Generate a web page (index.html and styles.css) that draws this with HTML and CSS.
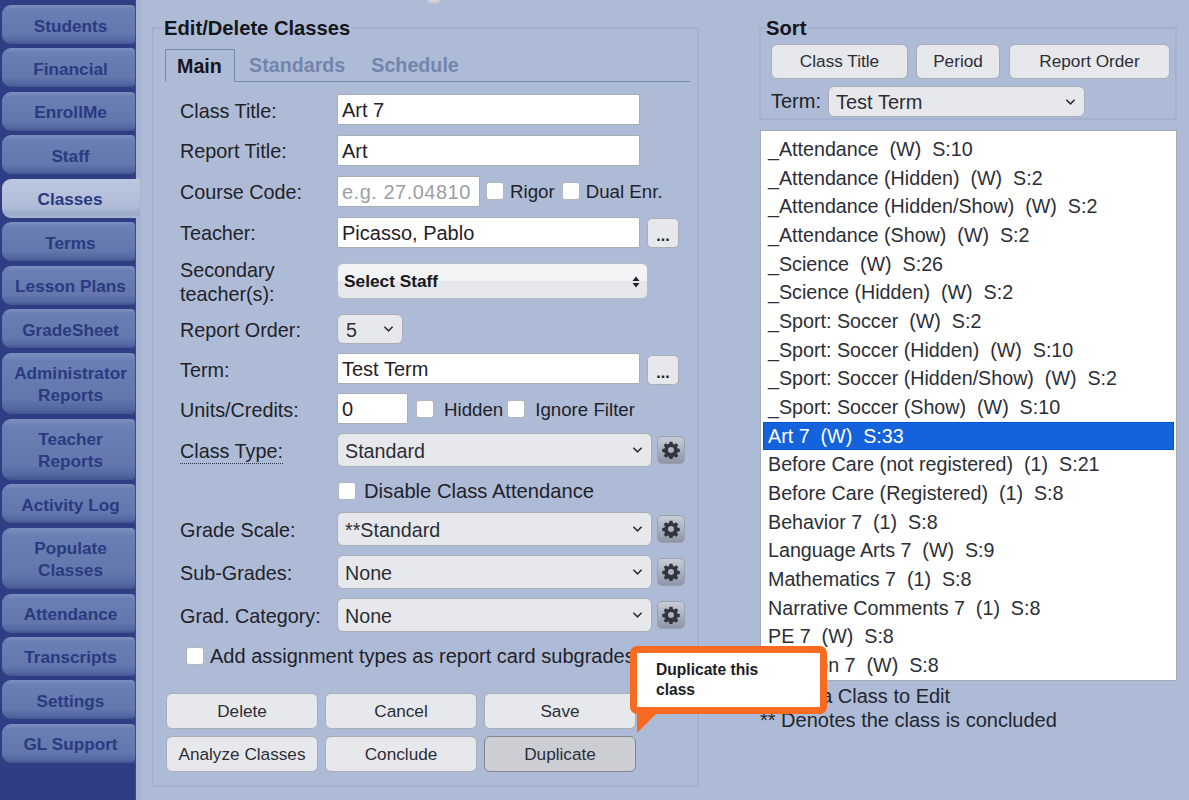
FILE: index.html
```html
<!DOCTYPE html>
<html lang="en">
<head>
<meta charset="utf-8">
<title>Edit/Delete Classes</title>
<link rel="stylesheet" href="styles.css">
</head>
<body>
<div class="page">
  <span class="top-blob"></span>
  <nav class="side">
    <a class="nav">Students</a>
    <a class="nav">Financial</a>
    <a class="nav">EnrollMe</a>
    <a class="nav">Staff</a>
    <a class="nav active">Classes</a>
    <a class="nav">Terms</a>
    <a class="nav">Lesson Plans</a>
    <a class="nav">GradeSheet</a>
    <a class="nav tall">Administrator<br>Reports</a>
    <a class="nav tall">Teacher<br>Reports</a>
    <a class="nav">Activity Log</a>
    <a class="nav tall">Populate<br>Classes</a>
    <a class="nav">Attendance</a>
    <a class="nav">Transcripts</a>
    <a class="nav">Settings</a>
    <a class="nav">GL Support</a>
  </nav>

  <main class="content">
    <fieldset class="box edit">
      <legend>Edit/Delete Classes</legend>
      <div class="tabs">
        <span class="tab current">Main</span>
        <span class="tab">Standards</span>
        <span class="tab">Schedule</span>
      </div>
      <div class="form">
        <div class="row"><label class="lbl">Class Title:</label><input class="txt wide" value="Art 7"></div>
        <div class="row h32"><label class="lbl">Report Title:</label><input class="txt wide" value="Art"></div>
        <div class="row h32"><label class="lbl">Course Code:</label><input class="txt code" placeholder="e.g. 27.04810"><span class="chk first"></span><span class="opt">Rigor</span><span class="chk second"></span><span class="opt">Dual Enr.</span></div>
        <div class="row h32"><label class="lbl">Teacher:</label><input class="txt wide" value="Picasso, Pablo"><button class="dots">...</button></div>
        <div class="row h48"><label class="lbl two">Secondary<br>teacher(s):</label>
          <div class="multi"><span>Select Staff</span>
            <svg class="updown" viewBox="0 0 8 12"><path d="M4 0.5 7.500 5H0.500ZM4 11.500 0.500 7H7.500Z"/></svg>
          </div>
        </div>
        <div class="row h30"><label class="lbl">Report Order:</label>
          <div class="sel small"><span>5</span><svg class="chev" viewBox="0 0 12 8"><path d="M1.500 1.500 6 6 10.500 1.500"/></svg></div>
        </div>
        <div class="row"><label class="lbl">Term:</label><input class="txt wide" value="Test Term"><button class="dots">...</button></div>
        <div class="row"><label class="lbl">Units/Credits:</label><input class="txt units" value="0"><span class="chk third"></span><span class="opt hid">Hidden</span><span class="chk fourth"></span><span class="opt">Ignore Filter</span></div>
        <div class="row h34"><label class="lbl dotted"><span>Class Type:</span></label>
          <div class="sel big"><span>Standard</span><svg class="chev" viewBox="0 0 12 8"><path d="M1.500 1.500 6 6 10.500 1.500"/></svg></div>
          <button class="gear"><svg viewBox="0 0 24 24"><path fill-rule="evenodd" d="M10 1h4l.6 3.100 1.700.7 2.600-1.800 2.800 2.800-1.800 2.600.7 1.700 3.100.6v4l-3.100.6-.7 1.700 1.800 2.600-2.800 2.800-2.600-1.800-1.700.7-.6 3.100h-4l-.6-3.100-1.700-.7-2.600 1.800-2.800-2.800 1.800-2.600-.7-1.700-3.100-.6v-4l3.100-.6.7-1.700-1.800-2.600 2.800-2.800 2.600 1.800 1.700-.7zM12 8a4 4 0 1 0 0 8 4 4 0 0 0 0-8z"/></svg></button>
        </div>
        <div class="row h27 indent"><span class="chk"></span><span class="opt disable">Disable Class Attendance</span></div>
        <div class="row h34"><label class="lbl">Grade Scale:</label>
          <div class="sel big"><span>**Standard</span><svg class="chev" viewBox="0 0 12 8"><path d="M1.500 1.500 6 6 10.500 1.500"/></svg></div>
          <button class="gear"><svg viewBox="0 0 24 24"><path fill-rule="evenodd" d="M10 1h4l.6 3.100 1.700.7 2.600-1.800 2.800 2.800-1.800 2.600.7 1.700 3.100.6v4l-3.100.6-.7 1.700 1.800 2.600-2.800 2.800-2.600-1.800-1.700.7-.6 3.100h-4l-.6-3.100-1.700-.7-2.600 1.800-2.800-2.800 1.800-2.600-.7-1.700-3.100-.6v-4l3.100-.6.7-1.700-1.800-2.600 2.800-2.800 2.600 1.800 1.700-.7zM12 8a4 4 0 1 0 0 8 4 4 0 0 0 0-8z"/></svg></button>
        </div>
        <div class="row h34"><label class="lbl">Sub-Grades:</label>
          <div class="sel big"><span>None</span><svg class="chev" viewBox="0 0 12 8"><path d="M1.500 1.500 6 6 10.500 1.500"/></svg></div>
          <button class="gear"><svg viewBox="0 0 24 24"><path fill-rule="evenodd" d="M10 1h4l.6 3.100 1.700.7 2.600-1.800 2.800 2.800-1.800 2.600.7 1.700 3.100.6v4l-3.100.6-.7 1.700 1.800 2.600-2.800 2.800-2.600-1.800-1.700.7-.6 3.100h-4l-.6-3.100-1.700-.7-2.600 1.800-2.800-2.800 1.800-2.600-.7-1.700-3.100-.6v-4l3.100-.6.7-1.700-1.800-2.600 2.800-2.800 2.600 1.800 1.700-.7zM12 8a4 4 0 1 0 0 8 4 4 0 0 0 0-8z"/></svg></button>
        </div>
        <div class="row h34"><label class="lbl">Grad. Category:</label>
          <div class="sel big"><span>None</span><svg class="chev" viewBox="0 0 12 8"><path d="M1.500 1.500 6 6 10.500 1.500"/></svg></div>
          <button class="gear"><svg viewBox="0 0 24 24"><path fill-rule="evenodd" d="M10 1h4l.6 3.100 1.700.7 2.600-1.800 2.800 2.800-1.800 2.600.7 1.700 3.100.6v4l-3.100.6-.7 1.700 1.800 2.600-2.800 2.800-2.600-1.800-1.700.7-.6 3.100h-4l-.6-3.100-1.700-.7-2.600 1.800-2.800-2.800 1.800-2.600-.7-1.700-3.100-.6v-4l3.100-.6.7-1.700-1.800-2.600 2.800-2.800 2.600 1.800 1.700-.7zM12 8a4 4 0 1 0 0 8 4 4 0 0 0 0-8z"/></svg></button>
        </div>
        <div class="row h26 addrow"><span class="chk"></span><span class="addtxt">Add assignment types as report card subgrades</span></div>
      </div>
      <div class="actions">
        <button class="btn">Delete</button>
        <button class="btn">Cancel</button>
        <button class="btn">Save</button>
        <button class="btn">Analyze Classes</button>
        <button class="btn">Conclude</button>
        <button class="btn pressed">Duplicate</button>
      </div>
    </fieldset>

    <div class="rightcol">
      <fieldset class="box sort">
        <legend>Sort</legend>
        <div class="sortbtns">
          <button class="btn b1">Class Title</button>
          <button class="btn b2">Period</button>
          <button class="btn b3">Report Order</button>
        </div>
        <div class="termrow">
          <span>Term:</span>
          <div class="sel termsel"><span>Test Term</span><svg class="chev" viewBox="0 0 12 8"><path d="M1.500 1.500 6 6 10.500 1.500"/></svg></div>
        </div>
      </fieldset>
      <ul class="list">
        <li>_Attendance  (W)  S:10</li>
        <li>_Attendance (Hidden)  (W)  S:2</li>
        <li>_Attendance (Hidden/Show)  (W)  S:2</li>
        <li>_Attendance (Show)  (W)  S:2</li>
        <li>_Science  (W)  S:26</li>
        <li>_Science (Hidden)  (W)  S:2</li>
        <li>_Sport: Soccer  (W)  S:2</li>
        <li>_Sport: Soccer (Hidden)  (W)  S:10</li>
        <li>_Sport: Soccer (Hidden/Show)  (W)  S:2</li>
        <li>_Sport: Soccer (Show)  (W)  S:10</li>
        <li class="sel-item">Art 7  (W)  S:33</li>
        <li>Before Care (not registered)  (1)  S:21</li>
        <li>Before Care (Registered)  (1)  S:8</li>
        <li>Behavior 7  (1)  S:8</li>
        <li>Language Arts 7  (W)  S:9</li>
        <li>Mathematics 7  (1)  S:8</li>
        <li>Narrative Comments 7  (1)  S:8</li>
        <li>PE 7  (W)  S:8</li>
        <li>Religion 7  (W)  S:8</li>
      </ul>
      <p class="note">Select a Class to Edit<br>** Denotes the class is concluded</p>
    </div>
  </main>

  <div class="tip">
    <p>Duplicate this class</p>
    <svg class="tail" viewBox="0 0 22 22"><path d="M0 0H22L0 22Z"/></svg>
  </div>
</div>
</body>
</html>
```
FILE: styles.css
```css
* { box-sizing: border-box; }
html, body { margin: 0; height: 100%; }
body {
  background: #aebbd6;
  color: #1f2229;
  font-family: "Liberation Sans", Arial, sans-serif;
  font-size: 20px;
  overflow: hidden;
}
.page {
  position: relative;
  display: flex;
  width: 1189px;
  height: 800px;
  overflow: hidden;
}
.top-blob {
  position: absolute;
  left: 426px;
  top: -5px;
  width: 16px;
  height: 9px;
  border-radius: 50%;
  background: radial-gradient(#d9d7d4 20%, #aebbd6 90%);
}

/* sidebar */
.side {
  flex: 0 0 135px;
  width: 135px;
  height: 800px;
  padding: 5px 0 0 2px;
  display: flex;
  flex-direction: column;
  gap: 4.470px;
  background: #2f3e84;
  box-shadow: 1px 0 0 #3a4a8e, 6px 0 0 #a8b6d3;
}
.nav {
  display: flex;
  align-items: center;
  justify-content: center;
  text-align: center;
  height: 39px;
  flex: none;
  border-radius: 9px 4px 4px 9px;
  background: linear-gradient(#7c90bf 0, #6a7fb4 12%, #6377ad 75%, #5266a0 92%, #43558f 100%);
  color: #2a3a80;
  font-weight: bold;
  font-size: 17.200px;
  line-height: 22px;
  padding: 2px 0 0 4px;
}
.nav.tall { height: 61.300px; }
.nav.active {
  width: 138px;
  background: linear-gradient(#bcc7df 0, #b1bdd8 70%, #9ba9c9 90%, #a9b6d3 100%);
  border-radius: 9px 0 0 9px;
  padding: 2px 2px 0 0;
}

/* panels */
.content {
  flex: 1;
  display: flex;
  align-items: flex-start;
  padding: 16px 12px 0 17px;
  gap: 61px;
}
.box {
  margin: 0;
  padding: 0;
  border: 2px solid #a3b1cf;
  min-width: 0;
}
.box legend {
  font-weight: bold;
  font-size: 20.200px;
  line-height: 24px;
  padding: 0 2px 0 0;
  margin-left: -2px;
  color: #14161c;
}
.edit {
  width: 547px;
  height: 771px;
  padding: 0 0 0 12px;
}
.tabs {
  display: flex;
  align-items: flex-end;
  height: 33px;
  margin: 9px 7px 0 -1px;
  border-bottom: 1px solid #7788b2;
}
.tab {
  padding: 0 13px;
  height: 33px;
  line-height: 34px;
  font-weight: bold;
  font-size: 19.700px;
  color: #7385ad;
}
.tab.current {
  width: 70px;
  color: #14161c;
  border: 1px solid #7788b2;
  border-bottom: 1px solid #aebbd6;
  padding: 0 11px;
  margin-right: 1px;
  margin-bottom: -1px;
  line-height: 32px;
}
.form {
  display: flex;
  flex-direction: column;
  gap: 9px;
  margin-top: 12px;
}
.row {
  display: flex;
  align-items: center;
  height: 31px;
  flex: none;
}
.h26 { height: 26px; }
.h27 { height: 27px; }
.h30 { height: 30px; }
.h32 { height: 32px; }
.h34 { height: 34px; }
.h48 { height: 48px; }
.lbl {
  flex: 0 0 171px;
  width: 171px;
  padding: 2px 0 0 14px;
  white-space: nowrap;
  line-height: 24px;
  font-size: 19.800px;
}
.dotted span { border-bottom: 1px dotted #2c3550; padding-bottom: 1px; }
.txt {
  height: 31px;
  border: 1px solid #a9adb6;
  border-radius: 2px;
  background: #fff;
  color: #1f2229;
  font: 20px "Liberation Sans", Arial, sans-serif;
  padding: 2px 4px 0;
}
.txt::placeholder { color: #9b9ea6; opacity: 1; letter-spacing: .5px; }
.wide { width: 303px; }
.code { width: 143px; }
.units { width: 71px; }
.chk {
  display: inline-block;
  flex: none;
  width: 18px;
  height: 18px;
  border: 1px solid #b3b6bf;
  border-radius: 3px;
  background: #fff;
}
.first { margin-left: 6px; margin-right: 6px; }
.second { margin-left: 7px; margin-right: 6px; }
.third { margin-left: 8px; margin-right: 10px; }
.fourth { margin-left: 4px; margin-right: 10px; }
.opt { white-space: nowrap; font-size: 18.700px; padding-top: 2px; }
.dots {
  width: 32px;
  height: 30px;
  margin: 2px 0 0 7px;
  padding: 6px 0 0;
  border: 1px solid #a9adb6;
  border-radius: 5px;
  background: #e7e8ec;
  color: #1f2229;
  font: bold 16px "Liberation Sans", Arial, sans-serif;
}
.multi {
  position: relative;
  width: 311px;
  height: 36px;
  padding-left: 6px;
  display: flex;
  align-items: center;
  border: 1px solid #b7bbc5;
  border-radius: 6px;
  background: linear-gradient(#f2f3f5 50%, #e6e7eb 50%);
  font-weight: bold;
  font-size: 17.300px;
  color: #16181d;
}
.updown {
  position: absolute;
  right: 7px;
  top: 12px;
  width: 8px;
  height: 12px;
  fill: #1f2229;
}
.sel {
  position: relative;
  display: flex;
  align-items: center;
  height: 34px;
  border: 1px solid #a9adb6;
  border-radius: 6px;
  background: #e7e8ec;
  padding: 2px 0 0 7px;
  color: #2b2e36;
  font-size: 19.700px;
}
.small { width: 66px; height: 30px; padding-left: 8px; }
.big { width: 315px; }
.chev {
  position: absolute;
  right: 8px;
  top: 50%;
  width: 11px;
  height: 8px;
  margin-top: -4px;
  fill: none;
  stroke: #2b2e36;
  stroke-width: 1.700;
}
.gear {
  width: 28px;
  height: 28px;
  margin-left: 5px;
  padding: 4px;
  border: 1px solid #9b9fae;
  border-radius: 5px;
  background: linear-gradient(#c9ccd6, #8f95a8);
}
.gear svg { display: block; width: 18px; height: 18px; fill: #33353c; }
.indent { padding: 2px 0 0 172px; }
.disable { margin-left: 8px; font-size: 20.200px; }
.addrow { padding: 4px 0 0 20px; }
.addtxt { margin-left: 6px; white-space: nowrap; font-size: 20px; }
.actions {
  display: grid;
  grid-template-columns: repeat(3, 152px);
  grid-auto-rows: 36px;
  gap: 7px;
  margin-top: 26px;
}
.btn {
  height: 36px;
  padding: 0;
  border: 1px solid #a9adb6;
  border-radius: 6px;
  background: #e7e8ec;
  color: #2b2e36;
  font: 17.200px "Liberation Sans", Arial, sans-serif;
}
.pressed { background: #cdced4; border-color: #83868f; }

/* right column */
.rightcol { width: 418px; }
.sort {
  width: 418px;
  height: 104px;
  margin-left: -1px;
  padding: 4px 0 0 10px;
}
.sort legend { margin-left: -5px; }
.sortbtns { display: flex; }
.b1 { width: 137px; height: 35px; }
.b2 { width: 84px; height: 35px; margin-left: 8px; }
.b3 { width: 161px; height: 35px; margin-left: 9px; }
.termrow {
  display: flex;
  align-items: center;
  margin-top: 7px;
  height: 31px;
}
.termrow > span { width: 57px; }
.termsel { width: 257px; height: 31px; font-size: 20px; }
.list {
  list-style: none;
  margin: 10px 0 0;
  padding: 4px 2px 0;
  height: 551px;
  width: 417px;
  background: #fff;
  border: 1px solid #a6aab4;
  overflow: hidden;
}
.list li {
  height: 28.670px;
  line-height: 28.670px;
  padding-left: 5px;
  white-space: pre;
  color: #2b2e36;
  font-size: 19.700px;
}
.list .sel-item {
  background: #1463dc;
  color: #fff;
  outline: 1px dotted #0f3f96;
  outline-offset: -1px;
}
.note {
  margin: 3px 0 0;
  line-height: 24px;
  color: #23262e;
}

/* callout */
.tip {
  position: absolute;
  left: 630px;
  top: 646px;
  width: 197px;
  height: 68px;
  padding: 7px 19px;
  border: 7px solid #f96a21;
  border-radius: 7px;
  background: #fff;
}
.tip p {
  margin: 0;
  max-width: 125px;
  font-weight: bold;
  font-size: 15.600px;
  line-height: 20px;
  color: #1b1d23;
}
.tail {
  position: absolute;
  left: 0;
  top: 60px;
  width: 20px;
  height: 20px;
  fill: #f96a21;
}
```
